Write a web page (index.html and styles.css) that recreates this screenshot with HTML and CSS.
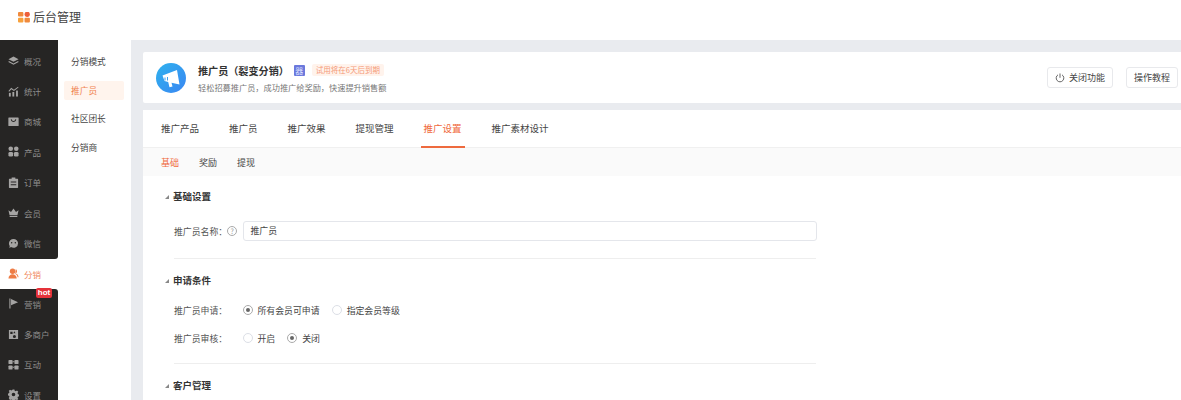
FILE: index.html
```html
<!DOCTYPE html>
<html lang="zh-CN">
<head>
<meta charset="utf-8">
<title>后台管理</title>
<link rel="stylesheet" href="styles.css">
</head>
<body>
<header class="topbar">
  <svg class="logo" viewBox="0 0 12 11" width="12" height="11"><rect x="0" y="0" width="5.4" height="4.6" rx="1" fill="#f08a3c"/><circle cx="9.2" cy="2.3" r="2.6" fill="#ee5f3a"/><rect x="0" y="5.8" width="5.4" height="4.8" rx="1" fill="#f7a13c"/><rect x="6.5" y="5.8" width="5.4" height="4.8" rx="1" fill="#f08a3c"/></svg>
  <span class="brand">后台管理</span>
</header>
<div class="shell">
  <nav class="rail">
    <div class="rail-group rail-top">
      <a class="rail-item"><svg class="ri" viewBox="0 0 12 12"><path d="M6 1.5 11.5 4.5 6 7.3.5 4.5Z"/><path d="M1 6.6 6 9.2l5-2.6.6 1L6 10.6.4 7.6Z"/></svg><span>概况</span></a>
      <a class="rail-item"><svg class="ri" viewBox="0 0 12 12"><path d="M.5 5.5 3.5 2 6.5 4 11 .8l.4.8L6.5 5.4 3.7 3.5 1.2 6.3Z"/><rect x="1" y="7.5" width="2" height="4"/><rect x="4.8" y="6.5" width="2" height="5"/><rect x="8.8" y="5" width="2" height="6.5"/></svg><span>统计</span></a>
      <a class="rail-item"><svg class="ri" viewBox="0 0 12 12"><path d="M1 1.5h10a.6.6 0 0 1 .6.6v8.3a.6.6 0 0 1-.6.6H1a.6.6 0 0 1-.6-.6V2.100A.6.6 0 0 1 1 1.500ZM3 3.500c.3 2 1.500 3 3 3s2.700-1 3-3l-1 0c-.3 1.300-1 2-2 2s-1.700-.7-2-2Z" fill-rule="evenodd"/></svg><span>商城</span></a>
      <a class="rail-item"><svg class="ri" viewBox="0 0 12 12"><circle cx="3" cy="3" r="2.500"/><circle cx="9" cy="3" r="2.500"/><rect x=".5" y="6.500" width="5" height="5" rx="1.500"/><rect x="6.500" y="6.500" width="5" height="5" rx="1.500"/></svg><span>产品</span></a>
      <a class="rail-item"><svg class="ri" viewBox="0 0 12 12"><path d="M4 .5h4V2h2.500a.5.5 0 0 1 .5.5v9a.5.5 0 0 1-.5.500h-9a.5.500 0 0 1-.5-.5v-9a.5.5 0 0 1 .5-.5H4ZM3 5v1h6V5ZM3 8v1h6V8Z" fill-rule="evenodd"/></svg><span>订单</span></a>
      <a class="rail-item"><svg class="ri" viewBox="0 0 12 12"><path d="M.5 3.500 3.300 5.500 6 1.500 8.700 5.500 11.500 3.500 10.300 9H1.700ZM1.800 9.800h8.400v1.200H1.800Z"/></svg><span>会员</span></a>
      <a class="rail-item"><svg class="ri" viewBox="0 0 12 12"><path d="M6 1a5 4.800 0 0 1 5 4.800A5 4.800 0 0 1 3.300 9.900L1.500 11l.4-2.300A4.800 4.800 0 0 1 1 5.800 5 4.800 0 0 1 6 1ZM4 4.400a.8.8 0 1 0 0 1.600.8.8 0 0 0 0-1.600ZM8 4.400a.8.8 0 1 0 0 1.600.8.8 0 0 0 0-1.600Z" fill-rule="evenodd"/></svg><span>微信</span></a>
    </div>
    <a class="rail-item rail-active"><svg class="ri" viewBox="0 0 12 12"><circle cx="5" cy="3.500" r="3"/><path d="M.5 11.500c0-3 2-4.800 4.500-4.800s4.500 1.800 4.500 4.800Z"/><path d="M8.500 1.200a2.800 2.800 0 0 1 0 4.800c1.800.6 3 2 3 4H10.500C10.300 8.500 9.500 7 8 6.500Z"/></svg><span>分销</span></a>
    <div class="rail-group rail-bottom">
      <span class="hot">hot</span>
      <a class="rail-item"><svg class="ri" viewBox="0 0 12 12"><path d="M1.500.5h1.200v11H1.500ZM3.300 1 11 4.500 3.300 8Z"/></svg><span>营销</span></a>
      <a class="rail-item"><svg class="ri" viewBox="0 0 12 12"><path d="M1 1h10v10H1ZM2.500 3v2.500H5V3ZM7 6.500a1.700 1.700 0 1 0 0 3.400 1.700 1.700 0 0 0 0-3.400ZM7 2.500 5.800 4.500h2.400Z" fill-rule="evenodd"/></svg><span>多商户</span></a>
      <a class="rail-item"><svg class="ri" viewBox="0 0 12 12"><rect x=".5" y="1" width="4.500" height="4.500" rx="1"/><rect x="7" y="1" width="4.500" height="4.500" rx="1"/><rect x=".5" y="7" width="4.500" height="4.500" rx="1"/><rect x="7" y="7" width="4.500" height="4.500" rx="1"/><rect x="5" y="2.500" width="2" height="1"/><rect x="5" y="8.500" width="2" height="1"/></svg><span>互动</span></a>
      <a class="rail-item"><svg class="ri" viewBox="0 0 12 12"><path d="M5 .5h2l.3 1.500 1.200.5L9.800 1.700l1.400 1.400-.8 1.300.5 1.200 1.500.4v2l-1.500.3-.5 1.200.8 1.300-1.400 1.400-1.300-.8-1.200.5-.3 1.500H5l-.3-1.500-1.200-.5-1.300.8L.8 9.800l.8-1.300-.5-1.200L-.4 7V5l1.500-.4.500-1.200-.8-1.300L2.200 .7l1.300.8 1.200-.5ZM6 4a2 2 0 1 0 0 4 2 2 0 0 0 0-4Z" fill-rule="evenodd"/></svg><span>设置</span></a>
    </div>
  </nav>
  <aside class="subnav">
    <a class="sub-item">分销模式</a>
    <a class="sub-item sub-active">推广员</a>
    <a class="sub-item">社区团长</a>
    <a class="sub-item">分销商</a>
  </aside>
  <main class="main">
    <section class="hero">
      <span class="hero-icon">
        <svg viewBox="0 0 30 30" width="30" height="30"><path d="M6.500 12.500 21 7l2.500 14.500-8-1.800 1 3.800-3 .7-1.300-5.300-3.700-.8Z" fill="#fff"/><path d="M9 14.500v3M11.500 14v3.500" stroke="#3b9ff0" stroke-width="1"/></svg>
      </span>
      <div class="hero-text">
        <div class="hero-title">
          <h1>推广员（裂变分销）</h1>
          <span class="vip">器</span>
          <span class="trial">试用将在6天后到期</span>
        </div>
        <p>轻松招募推广员，成功推广给奖励，快速提升销售额</p>
      </div>
      <div class="hero-actions">
        <button class="btn btn-power"><svg viewBox="0 0 10 10" width="10" height="10" fill="none" stroke="#555" stroke-width=".9"><path d="M3 1.800a3.800 3.800 0 1 0 4 0M5 .5v4.300"/></svg>关闭功能</button>
        <button class="btn btn-help">操作教程</button>
      </div>
    </section>
    <section class="panel">
      <div class="tabs">
        <a class="tab">推广产品</a>
        <a class="tab">推广员</a>
        <a class="tab">推广效果</a>
        <a class="tab">提现管理</a>
        <a class="tab tab-active">推广设置</a>
        <a class="tab">推广素材设计</a>
      </div>
      <div class="subtabs">
        <a class="subtab subtab-active">基础</a>
        <a class="subtab">奖励</a>
        <a class="subtab">提现</a>
      </div>
      <form class="form">
        <h2 class="sec">基础设置</h2>
        <div class="row row-input">
          <label class="lbl">推广员名称：<span class="help">?</span></label>
          <div class="input">推广员</div>
        </div>
        <hr class="rule">
        <h2 class="sec">申请条件</h2>
        <div class="row row-a">
          <span class="lbl">推广员申请：</span>
          <span class="radio on"></span><span class="opt">所有会员可申请</span>
          <span class="radio"></span><span class="opt">指定会员等级</span>
        </div>
        <div class="row row-b">
          <span class="lbl">推广员审核：</span>
          <span class="radio"></span><span class="opt">开启</span>
          <span class="radio on"></span><span class="opt">关闭</span>
        </div>
        <hr class="rule rule-b">
        <h2 class="sec">客户管理</h2>
      </form>
    </section>
  </main>
</div>
</body>
</html>
```

FILE: styles.css
```css
* { box-sizing: border-box; }
html, body { margin: 0; height: 400px; overflow: hidden; background: #fff; }
body { font-family: "Noto Sans CJK SC", "Noto Sans", sans-serif; color: #333; }
a { display: block; }

.topbar { height: 40px; display: flex; align-items: center; padding-left: 18px; padding-bottom: 6px; background: #fff; }
.logo { flex: none; }
.brand { margin-left: 3px; font-size: 12px; line-height: 16px; color: #444; }

.shell { display: flex; height: 360px; }

.rail { width: 58px; flex: none; background: #fff; }
.rail-group { background: #262524; position: relative; }
.rail-top { padding-top: 6px; height: 219px; border-bottom-right-radius: 3px; }
.rail-bottom { height: 111px; border-top-right-radius: 3px; }
.rail-item { height: 30.4px; display: flex; align-items: center; padding: 0 0 1px 8px; font-size: 8.500px; color: #8f8e8d; white-space: nowrap; }
.ri { width: 11px; height: 11px; flex: none; margin-right: 5px; fill: #a5a4a3; }
.rail-active { height: 30px; color: #f0875a; background: #fff; }
.rail-active .ri { fill: #ee7c45; }
.hot { position: absolute; left: 36px; top: -1px; width: 16px; height: 10px; border-radius: 2px; background: #e5323a; color: #fff; font: bold 8px/9px "Liberation Sans", sans-serif; text-align: center; }

.subnav { width: 73px; flex: none; padding: 12px 7px 0 6px; background: #fff; }
.sub-item { height: 19px; margin-bottom: 9.500px; padding-left: 7px; font-size: 8.700px; line-height: 20px; color: #444; border-radius: 2px; }
.sub-active { background: #fff4ed; color: #f0824e; }

.main { flex: 1; min-width: 0; padding: 12px 0 0 12px; background: #e9ebef; }

.hero { height: 51px; display: flex; align-items: center; padding: 0 3px 0 13px; background: #fff; border-radius: 2px 0 0 2px; }
.hero-icon { width: 30px; height: 30px; flex: none; border-radius: 50%; background: linear-gradient(135deg, #2fb2ee, #3a86f2); }
.hero-icon svg { display: block; }
.hero-text { margin-left: 12px; flex: 1; }
.hero-title { display: flex; align-items: center; height: 17px; }
.hero-title h1 { margin: 0; font-size: 10.100px; line-height: 17px; font-weight: 700; color: #333; white-space: nowrap; }
.vip { width: 11px; height: 11px; margin-left: 5px; background: #6b78dc; color: #dfe3ff; font-size: 8px; line-height: 11px; text-align: center; border-radius: 1px; }
.trial { margin-left: 7px; padding: 0 4px; height: 12px; background: #fff3ec; color: #f59a78; font-size: 7.500px; line-height: 12px; border-radius: 2px; white-space: nowrap; }
.hero-text p { margin: 2px 0 0; font-size: 8.200px; line-height: 13px; color: #777; }
.hero-actions { display: flex; align-items: center; gap: 13px; }
.btn { height: 21px; padding: 0; display: flex; align-items: center; justify-content: center; background: #fff; border: 1px solid #e8e9ec; border-radius: 3px; font-family: inherit; font-size: 9px; color: #444; }
.btn-power { width: 66px; gap: 4px; }
.btn-help { width: 52px; }

.panel { height: 290px; margin-top: 7px; background: #fff; }
.tabs { height: 38px; display: flex; padding-left: 15px; gap: 24px; background: #fff; border-bottom: 1px solid #f0f0f0; }
.tab { height: 38px; padding: 0 3px; font-size: 9.500px; line-height: 37px; color: #444; }
.tab-active { color: #f0693c; border-bottom: 2px solid #ee6a3e; }
.subtabs { height: 28px; display: flex; padding-left: 18px; gap: 20px; background: #fafafa; }
.subtab { font-size: 9px; line-height: 29px; color: #444; }
.subtab-active { color: #f0693c; }

.form { padding: 11px 0 0 22px; }
.sec { position: relative; height: 18px; margin: 0; padding-left: 8px; font-size: 9.500px; line-height: 18px; font-weight: 700; color: #333; }
.sec::before { content: ""; position: absolute; left: 0; top: 8px; width: 4px; height: 4px; background: #888; clip-path: polygon(100% 0, 100% 100%, 0 100%); }
.row { display: flex; align-items: center; height: 20px; padding-left: 9px; font-size: 8.900px; color: #555; }
.row-input { margin-top: 16px; }
.row-a { margin-top: 11px; }
.row-b { margin-top: 8px; }
.lbl { width: 68.500px; flex: none; display: flex; align-items: center; }
.help { width: 10px; height: 10px; margin-left: 0; border: 1px solid #aaa; border-radius: 50%; color: #999; font-size: 7px; line-height: 8px; text-align: center; }
.input { width: 574px; height: 20px; padding-left: 7px; border: 1px solid #e4e6eb; border-radius: 3px; line-height: 18px; color: #444; }
.rule { height: 1px; width: 642px; margin: 17px 0 12px 9px; border: 0; background: #eee; }
.rule-b { margin-top: 15px; }
.radio { width: 10px; height: 10px; flex: none; margin-right: 5px; border: 1px solid #dcdfe6; border-radius: 50%; background: #fff; position: relative; }
.radio.on { border-color: #aaa; }
.radio.on::after { content: ""; position: absolute; left: 2px; top: 2px; width: 4px; height: 4px; border-radius: 50%; background: #666; }
.opt { margin-right: 12px; color: #444; }
```
